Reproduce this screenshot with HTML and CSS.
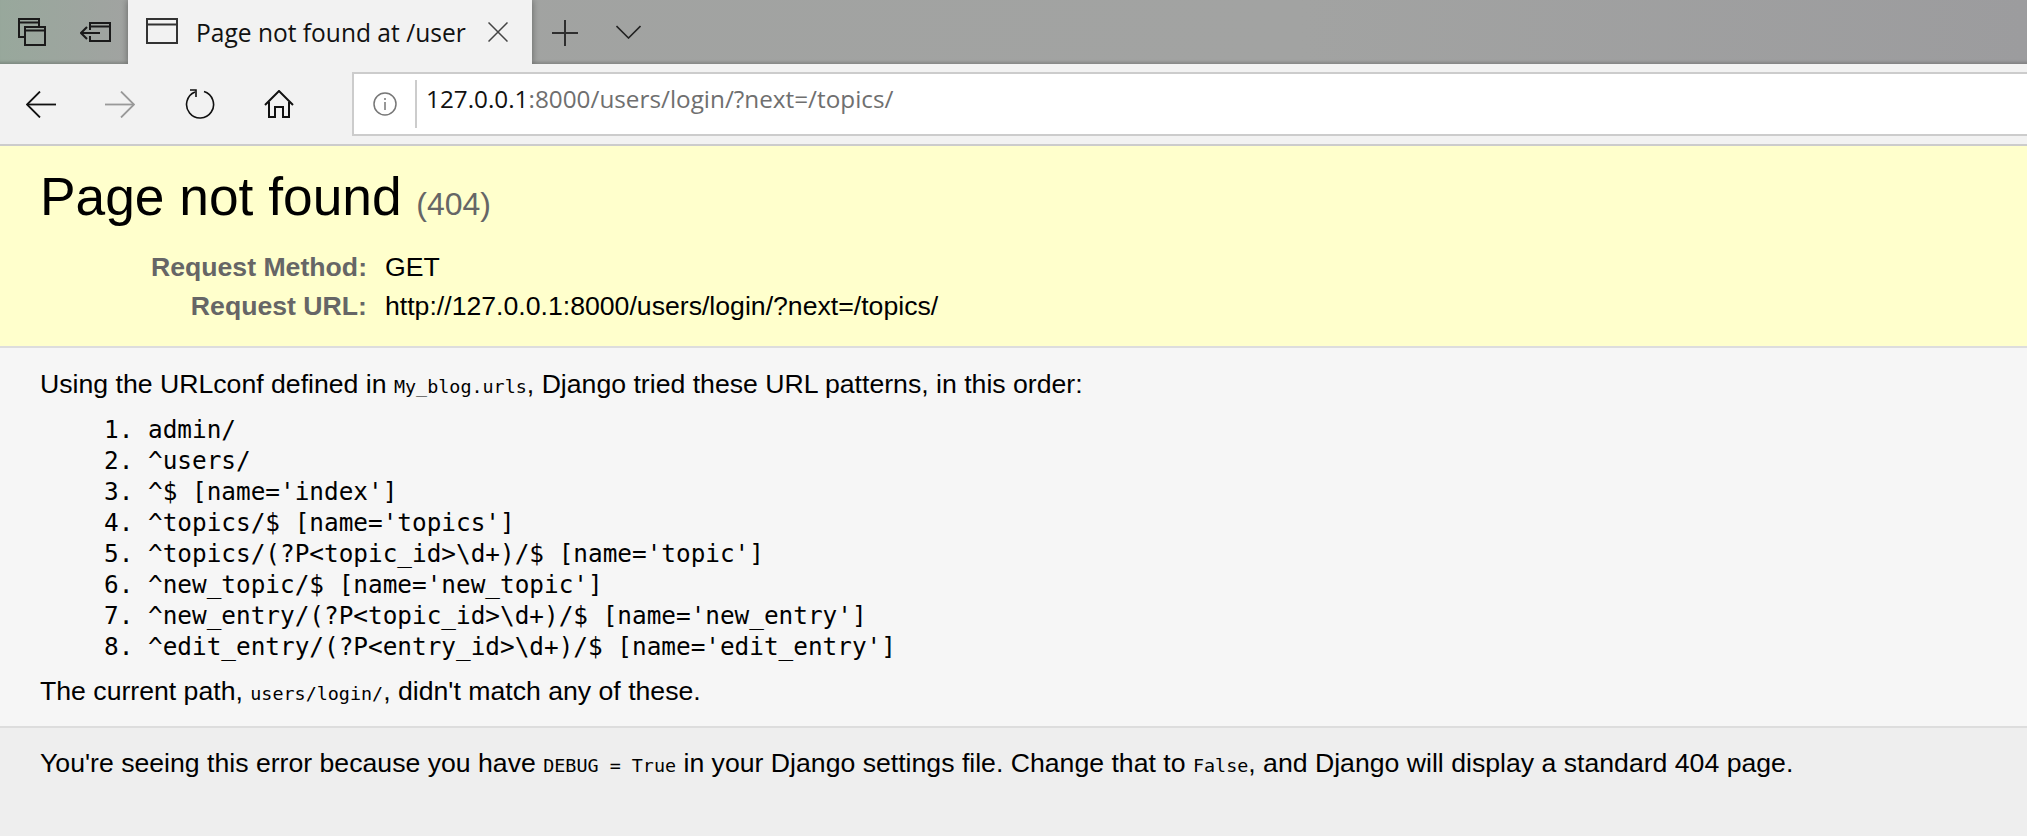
FILE: index.html
```html
<!DOCTYPE html>
<html lang="en">
<head>
    <meta charset="UTF-8">
    <title>Page not found at /users/login/</title>
    <link rel="stylesheet" href="styles.css">
</head>
<body>
    <div class="tab-strip">
        <div class="strip-btn">
            <svg width="28" height="28" viewBox="0 0 28 28" fill="none" stroke="#1a1a1a" stroke-width="2">
                <path d="M6 19H1V1h20v7"/><path d="M1 4.500h20"/>
                <rect x="7" y="9" width="20" height="18"/><path d="M7 12.500h20"/>
            </svg>
        </div>
        <div class="strip-btn">
            <svg width="32" height="22" viewBox="0 0 32 22" fill="none" stroke="#1a1a1a" stroke-width="2">
                <path d="M10 9V2h20v18H10v-5"/><path d="M10 5.500h20"/><path d="M1 12h19"/><path d="M7 6l-6 6 6 6"/>
            </svg>
        </div>
        <div class="tab">
            <svg class="tab-icon" width="32" height="26" viewBox="0 0 32 26" fill="none" stroke="#333" stroke-width="2">
                <rect x="1" y="1" width="30" height="24"/><path d="M1 6.500h30"/>
            </svg>
            <span class="tab-title">Page not found at /user</span>
            <svg class="tab-close" width="20" height="20" viewBox="0 0 20 20" fill="none" stroke="#444" stroke-width="1.500">
                <path d="M0.500 0.500l19 19M19.500 0.500l-19 19"/>
            </svg>
        </div>
        <div class="strip-btn new-tab">
            <svg width="26" height="26" viewBox="0 0 26 26" fill="none" stroke="#2e2e2e" stroke-width="2">
                <path d="M13 0v26M0 13h26"/>
            </svg>
        </div>
        <div class="strip-btn tab-menu">
            <svg width="25" height="14" viewBox="0 0 25 14" fill="none" stroke="#222" stroke-width="1.600">
                <path d="M0.500 1l12 12 12-12"/>
            </svg>
        </div>
    </div>

    <div class="toolbar">
        <div class="nav-btn">
            <svg width="30" height="27" viewBox="0 0 30 27" fill="none" stroke="#111" stroke-width="1.800">
                <path d="M1 13.500h29"/><path d="M14 0.500l-13 13 13 13"/>
            </svg>
        </div>
        <div class="nav-btn">
            <svg width="30" height="27" viewBox="0 0 30 27" fill="none" stroke="#999" stroke-width="1.800">
                <path d="M0 13.500h29"/><path d="M16 0.500l13 13-13 13"/>
            </svg>
        </div>
        <div class="nav-btn">
            <svg width="30" height="30" viewBox="0 0 30 30" fill="none" stroke="#111" stroke-width="1.600">
                <path d="M19 2.600a13.500 13.500 0 1 1-9 0.400"/><path d="M5 1h6v7"/>
            </svg>
        </div>
        <div class="nav-btn">
            <svg width="30" height="28" viewBox="0 0 30 28" fill="none" stroke="#111" stroke-width="2">
                <path d="M1 15L15 1l14 14"/><path d="M5 12v15h6V17h8v10h6V12"/>
            </svg>
        </div>
        <div class="address-bar">
            <svg class="info-icon" width="24" height="24" viewBox="0 0 24 24" fill="none" stroke="#777" stroke-width="1.500">
                <circle cx="12" cy="12" r="11"/><path d="M12 10v8M12 6v2"/>
            </svg>
            <span class="address-sep"></span>
            <span class="address-text"><b>127.0.0.1</b>:8000/users/login/?next=/topics/</span>
        </div>
    </div>

    <div id="summary">
        <h1>Page not found <span>(404)</span></h1>
        <table class="meta">
            <tr><th>Request Method:</th><td>GET</td></tr>
            <tr><th>Request URL:</th><td>http://127.0.0.1:8000/users/login/?next=/topics/</td></tr>
        </table>
    </div>

    <div id="info">
        <p>Using the URLconf defined in <code>My_blog.urls</code>, Django tried these URL patterns, in this order:</p>
        <ol>
            <li>admin/</li>
            <li>^users/</li>
            <li>^$ [name='index']</li>
            <li>^topics/$ [name='topics']</li>
            <li>^topics/(?P&lt;topic_id&gt;\d+)/$ [name='topic']</li>
            <li>^new_topic/$ [name='new_topic']</li>
            <li>^new_entry/(?P&lt;topic_id&gt;\d+)/$ [name='new_entry']</li>
            <li>^edit_entry/(?P&lt;entry_id&gt;\d+)/$ [name='edit_entry']</li>
        </ol>
        <p>The current path, <code>users/login/</code>, didn't match any of these.</p>
    </div>

    <div id="explanation">
        <p>You're seeing this error because you have <code>DEBUG = True</code> in your Django settings file. Change that to <code>False</code>, and Django will display a standard 404 page.</p>
    </div>
</body>
</html>
```

FILE: styles.css
```css
* {
    margin: 0;
    padding: 0;
    box-sizing: border-box;
}

html, body {
    height: 100%;
}

body {
    display: flex;
    flex-direction: column;
    overflow: hidden;
    font-family: 'Liberation Sans', Arial, sans-serif;
    font-size: 26.65px;
    color: #000;
    background: #eee;
}

/* Browser chrome */
.tab-strip {
    height: 64px;
    flex: none;
    display: flex;
    align-items: center;
    background: linear-gradient(90deg, #98a89c 0, #a1a3a1 130px, #a2a3a2 1300px, #9c9c9e 100%);
    box-shadow: inset 0 -4px 3px -2px rgba(0, 0, 0, 0.18);
}

.strip-btn {
    width: 64px;
    height: 64px;
    flex: none;
    display: flex;
    align-items: center;
    justify-content: center;
}

.new-tab {
    width: 66px;
    padding-top: 2px;
}

.tab-menu {
    width: 60px;
}

.tab {
    width: 404px;
    height: 64px;
    flex: none;
    display: flex;
    align-items: center;
    background: #f2f2f2;
    padding-left: 18px;
    box-shadow: 0 0 7px rgba(0, 0, 0, 0.4);
}

.tab-icon {
    flex: none;
    margin-top: -2px;
}

.tab-title {
    width: 282px;
    margin-left: 18px;
    overflow: hidden;
    white-space: nowrap;
    font-family: 'Open Sans', sans-serif;
    font-size: 24.55px;
    color: #111;
}

.tab-close {
    flex: none;
    margin-left: 10px;
}

.toolbar {
    height: 82px;
    flex: none;
    display: flex;
    align-items: center;
    background: #f2f2f2;
    border-bottom: 2px solid #ccc;
    padding-left: 1px;
}

.nav-btn {
    width: 79.5px;
    height: 64px;
    flex: none;
    display: flex;
    align-items: center;
    justify-content: center;
}

.address-bar {
    flex: 1;
    height: 64px;
    margin-left: 33px;
    margin-right: -4px;
    display: flex;
    align-items: center;
    background: #fff;
    border: 2px solid #ccc;
    padding-left: 19px;
}

.info-icon {
    flex: none;
}

.address-sep {
    width: 2px;
    height: 48px;
    margin-left: 18px;
    background: #ccc;
}

.address-text {
    margin-left: 9px;
    margin-bottom: 11px;
    font-family: 'Open Sans', sans-serif;
    font-size: 24.3px;
    color: #6f6f6f;
}

.address-text b {
    font-weight: normal;
    color: #111;
}

/* Django debug page */
#summary {
    height: 202px;
    flex: none;
    background: #ffc;
    border-bottom: 2px solid #ddd;
    padding: 20px 40px 0;
}

h1 {
    font-size: 53.3px;
    font-weight: normal;
    margin-bottom: 21px;
}

h1 span {
    font-size: 60%;
    color: #666;
}

.meta {
    border: none;
    border-collapse: collapse;
}

.meta th {
    width: 345px;
    padding: 4px 18px 4px 0;
    text-align: right;
    color: #666;
    font-weight: bold;
}

.meta td {
    padding: 4px 0;
}

#info {
    height: 380px;
    flex: none;
    background: #f6f6f6;
    border-bottom: 2px solid #ddd;
    padding: 21px 40px 0;
}

code {
    font-family: 'DejaVu Sans Mono', monospace;
    font-size: 18.4px;
}

ol {
    margin: 14px 0 14px 108px;
    font-family: 'DejaVu Sans Mono', monospace;
    font-size: 24.37px;
    line-height: 31px;
}

#explanation {
    flex: 1;
    padding: 20px 40px;
}
```
